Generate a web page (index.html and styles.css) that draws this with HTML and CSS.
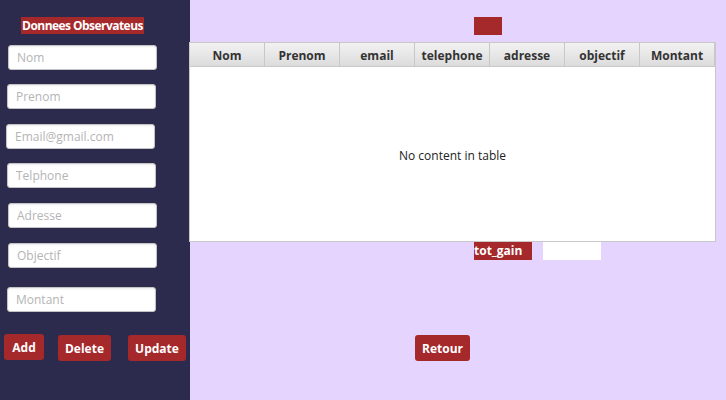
FILE: index.html
```html
<!DOCTYPE html>
<html>
<head>
<meta charset="utf-8">
<link rel="stylesheet" href="styles.css">
</head>
<body>
<div class="app">
  <aside class="side">
    <div class="title">Donnees Observateus</div>
    <input class="field f-nom" placeholder="Nom">
    <input class="field f-prenom" placeholder="Prenom">
    <input class="field f-email" placeholder="Email@gmail.com">
    <input class="field f-tel" placeholder="Telphone">
    <input class="field f-adr" placeholder="Adresse">
    <input class="field f-obj" placeholder="Objectif">
    <input class="field f-mont" placeholder="Montant">
    <div class="actions">
      <button class="btn b-add">Add</button>
      <button class="btn b-del">Delete</button>
      <button class="btn b-upd">Update</button>
    </div>
  </aside>
  <main class="main">
    <div class="tag"></div>
    <div class="table">
      <div class="thead">
        <div class="th">Nom</div>
        <div class="th">Prenom</div>
        <div class="th">email</div>
        <div class="th">telephone</div>
        <div class="th">adresse</div>
        <div class="th">objectif</div>
        <div class="th">Montant</div>
        <div class="th filler"></div>
      </div>
      <div class="tbody">No content in table</div>
    </div>
    <div class="gain-row">
      <div class="gain-label">tot_gain</div>
      <div class="gain-value"></div>
    </div>
    <button class="btn retour">Retour</button>
  </main>
</div>
</body>
</html>
```
FILE: styles.css
```css
* { box-sizing: border-box; }
html, body { margin: 0; padding: 0; }
body {
  width: 726px;
  height: 400px;
  overflow: hidden;
  font-family: "Open Sans", "Noto Sans", sans-serif;
}
.app {
  display: flex;
  width: 726px;
  height: 400px;
}
.side {
  width: 190px;
  flex: none;
  background: #2c2a4d;
  display: flex;
  flex-direction: column;
  align-items: flex-start;
}
.title {
  margin: 17px 0 0 21px;
  width: 123px;
  height: 17px;
  background: #a5282b;
  color: #fff;
  font-weight: bold;
  font-size: 12px;
  line-height: 17px;
  text-align: center;
  white-space: nowrap;
  letter-spacing: -0.55px;
}
.field {
  width: 149px;
  height: 25px;
  border: 1px solid #c4c4c4;
  border-radius: 3px;
  background: #fff;
  box-shadow: inset 0 1px 2px rgba(0,0,0,0.08);
  padding: 0 8px;
  font-family: inherit;
  font-size: 12px;
  color: #333;
  outline: none;
}
.field::placeholder { color: #b4b4b4; }
.f-nom { margin: 11px 0 0 8px; }
.f-prenom { margin: 14px 0 0 7px; }
.f-email { margin: 15px 0 0 6px; }
.f-tel { margin: 14px 0 0 7px; }
.f-adr { margin: 15px 0 0 8px; }
.f-obj { margin: 15px 0 0 8px; }
.f-mont { margin: 19px 0 0 7px; }
.actions {
  display: flex;
  align-items: flex-start;
  margin-top: 22px;
  margin-left: 4px;
}
.btn {
  height: 26px;
  border: none;
  border-radius: 3px;
  background: #a5282b;
  color: #fff;
  font-family: inherit;
  font-weight: bold;
  font-size: 12px;
  padding: 0;
  cursor: pointer;
}
.b-add { width: 40px; }
.b-del { width: 53px; margin-left: 14px; margin-top: 1px; }
.b-upd { width: 58px; margin-left: 17px; margin-top: 1px; }
.main {
  flex: 1;
  background: #e5d4fe;
  display: flex;
  flex-direction: column;
  align-items: flex-start;
}
.tag {
  margin: 17px 0 0 284px;
  width: 28px;
  height: 18px;
  background: #a5282b;
}
.table {
  margin: 7px 0 0 -1px;
  width: 527px;
  height: 200px;
  border: 1px solid #c8c8c8;
  background: #fff;
  display: flex;
  flex-direction: column;
}
.thead {
  display: flex;
  height: 24px;
  flex: none;
  background: linear-gradient(#f2f2f2, #dcdcdc);
  border-bottom: 1px solid #c8c8c8;
}
.th {
  width: 75px;
  flex: none;
  border-right: 1px solid #c8c8c8;
  font-weight: bold;
  font-size: 12px;
  color: #333;
  text-align: center;
  line-height: 25px;
}
.th.filler { flex: 1; width: auto; border-right: none; }
.tbody {
  flex: 1;
  display: flex;
  align-items: center;
  justify-content: center;
  font-size: 12px;
  color: #222;
  padding-top: 2px;
}
.gain-row {
  display: flex;
  margin: 0 0 0 284px;
}
.gain-label {
  width: 58px;
  height: 18px;
  background: #a5282b;
  color: #fff;
  font-weight: bold;
  font-size: 12px;
  line-height: 18px;
  white-space: nowrap;
}
.gain-value {
  width: 58px;
  height: 18px;
  background: #fff;
  margin-left: 11px;
}
.retour {
  margin: 75px 0 0 225px;
  width: 55px;
}
```
